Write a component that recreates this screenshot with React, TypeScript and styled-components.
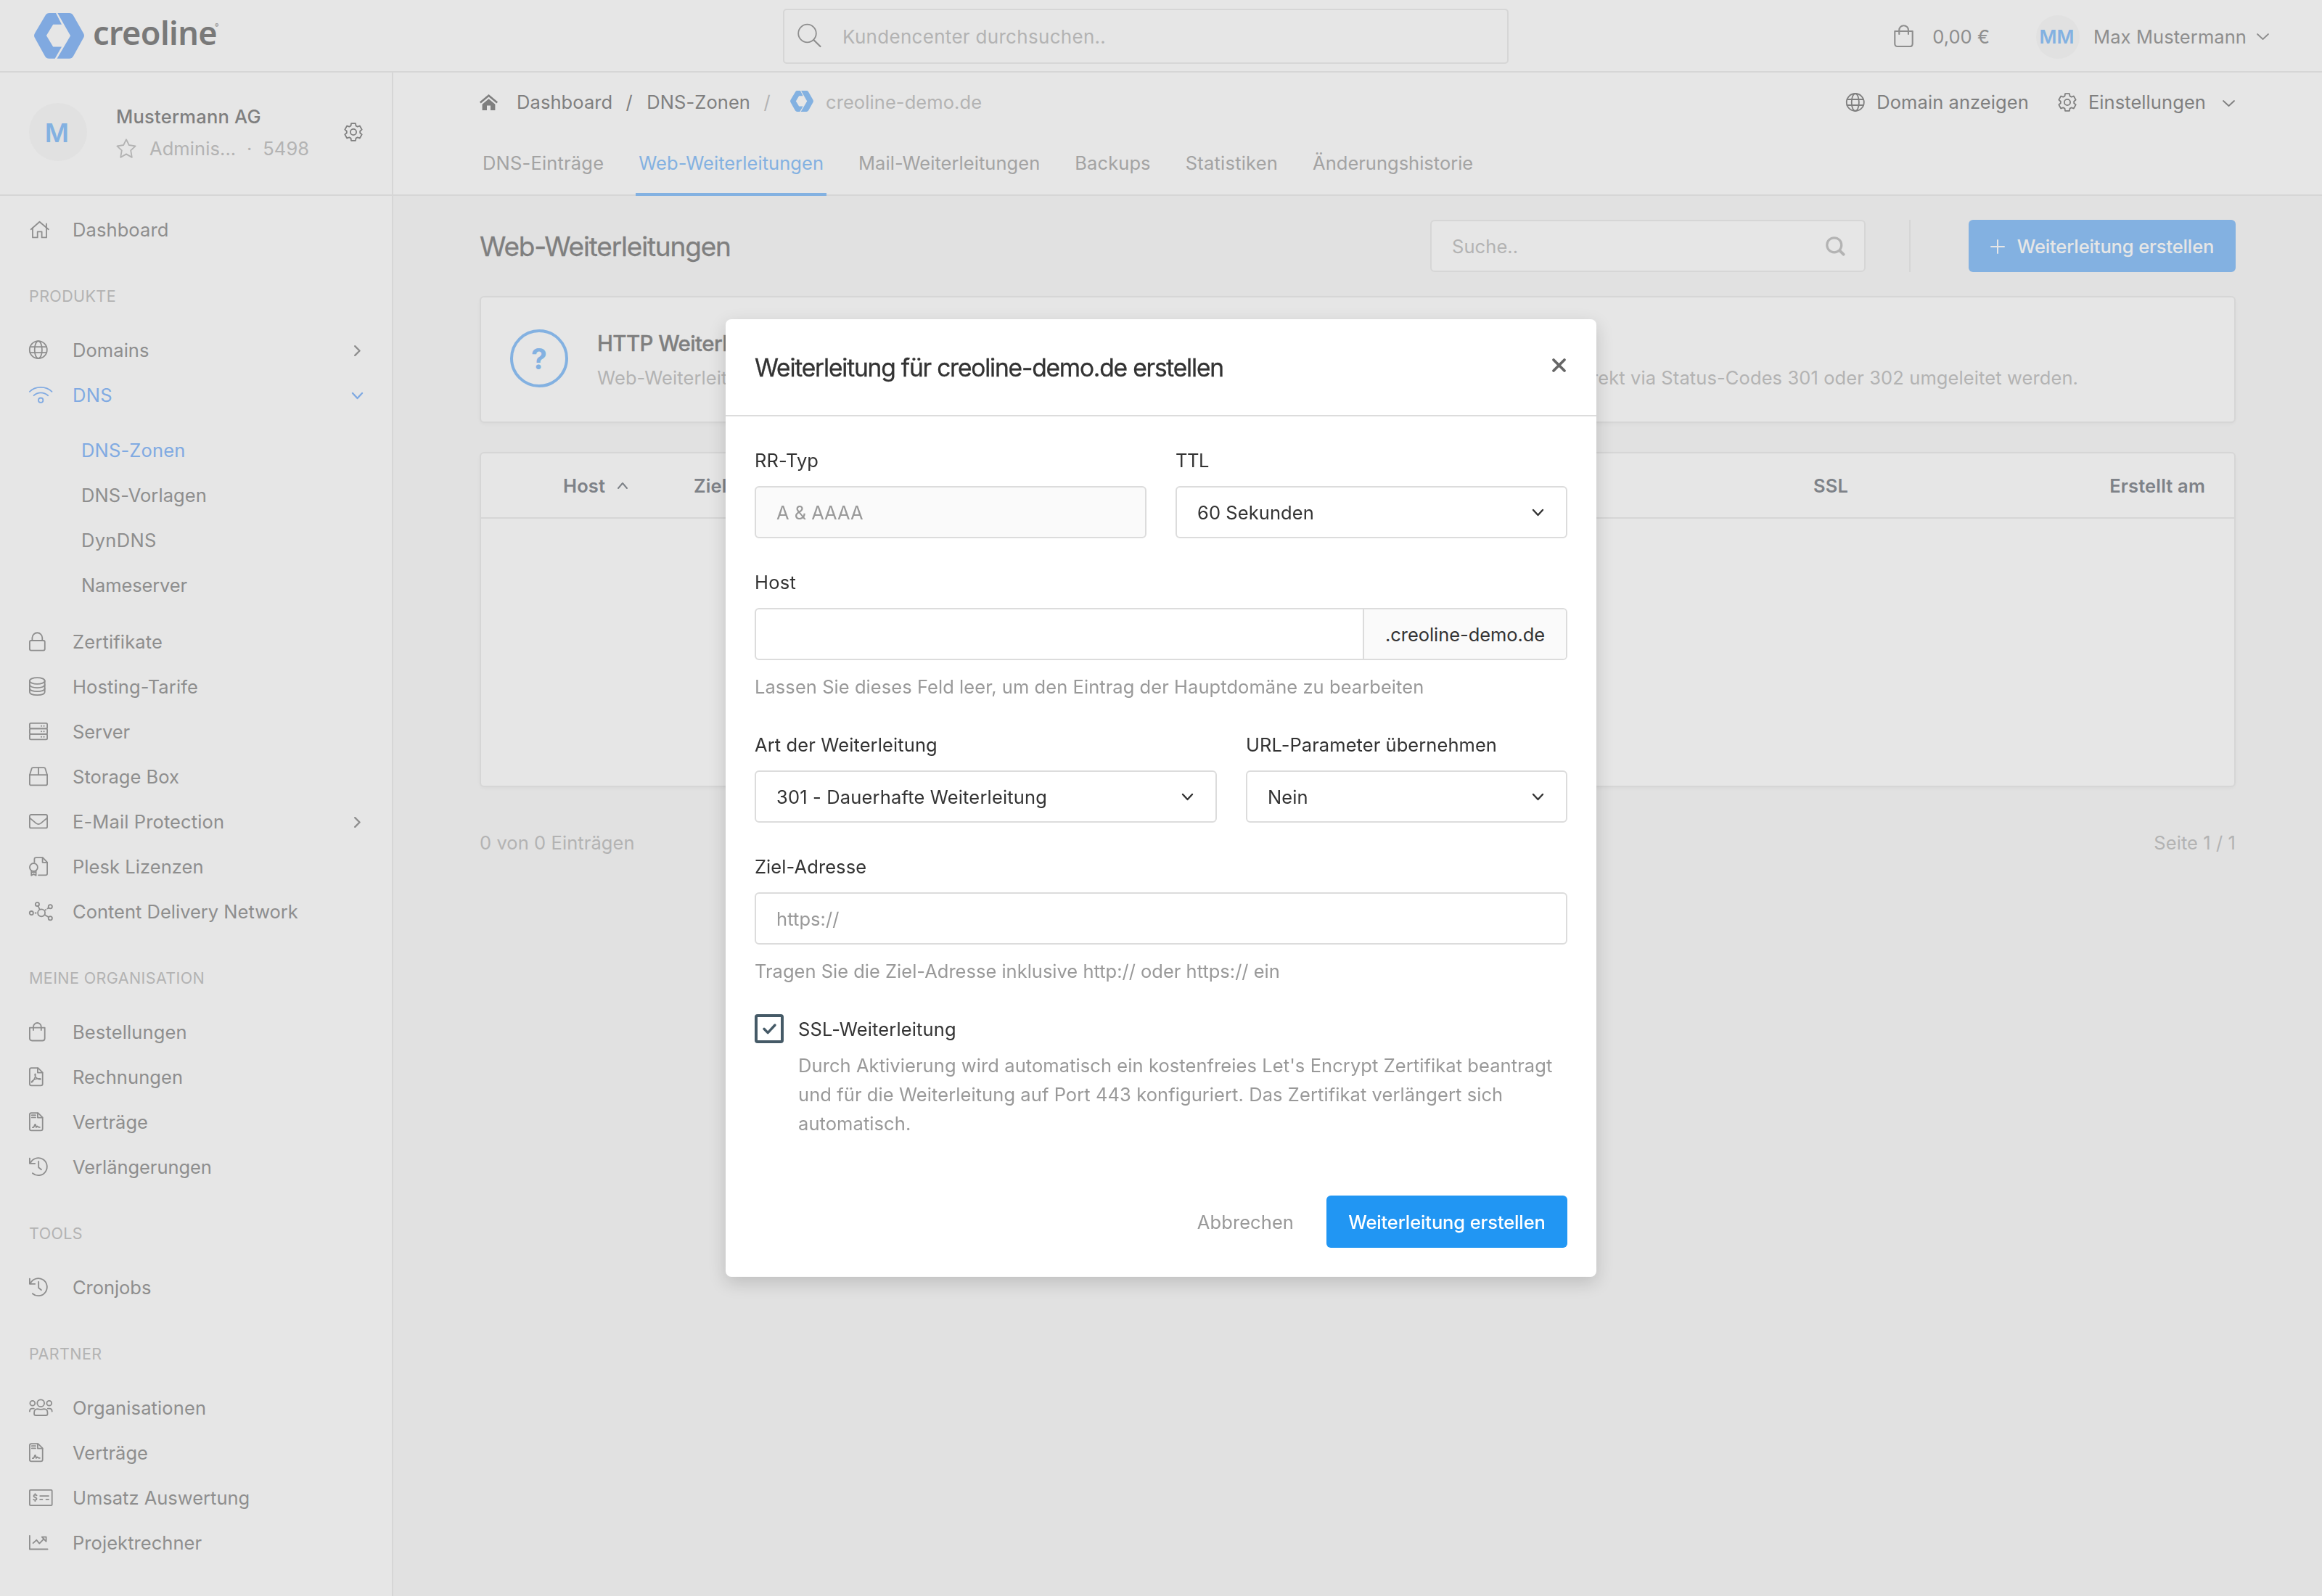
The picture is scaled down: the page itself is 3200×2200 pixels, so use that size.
import React from "react";
import styled, { createGlobalStyle, css } from "styled-components";

const color = {
  page: "#e1e1e1",
  surface: "#e6e6e6",
  line: "#d6d6d6",
  strong: "#7f7f7f",
  text: "#8e8e8e",
  tab: "#a3a3a3",
  muted: "#b3b3b3",
  blue: "#83b1e1",
  navBlue: "#80aae2",
  tableHead: "#7e8288",
  avatar: "#e1e1e1",
  ink: "#333333",
  hint: "#999999",
  field: "#dcdcdc",
  disabled: "#fafafa",
  primary: "#2196f3",
  check: "#455a67",
};

const GlobalStyle = createGlobalStyle`
  *, *::before, *::after { box-sizing: border-box; }
  body {
    margin: 0;
    background: ${color.page};
    font-family: Inter, "Liberation Sans", sans-serif;
    font-size: 25.5px;
    letter-spacing: 0.08px;
    -webkit-font-smoothing: antialiased;
  }
`;

type Tracked = { $ls?: number };
const tracked = css<Tracked>`
  ${(p) => (p.$ls !== undefined ? `letter-spacing: ${p.$ls}px;` : "")}
`;

/* ---------- Icons ---------- */

const Svg = styled.svg`
  display: block;
  flex: none;
  overflow: visible;
  fill: none;
  stroke: currentColor;
  stroke-width: 1.8;
  stroke-linecap: round;
  stroke-linejoin: round;
`;

const cogPath = (cx: number, cy: number, outer: number, inner: number) => {
  const pts: string[] = [];
  const at = (r: number, deg: number) => {
    const a = (deg * Math.PI) / 180;
    return `${(cx + r * Math.cos(a)).toFixed(2)} ${(cy + r * Math.sin(a)).toFixed(2)}`;
  };
  for (let i = 0; i < 6; i++) {
    const base = -90 + i * 60;
    pts.push(at(inner, base - 22), at(outer, base - 14), at(outer, base + 14), at(inner, base + 22));
  }
  return `M${pts.join("L")}Z`;
};

const CogIcon = () => (
  <Svg width="26" height="26" viewBox="0 0 26 26">
    <path d={cogPath(13, 13, 12.2, 9.3)} />
    <circle cx="13" cy="13" r="4.1" />
  </Svg>
);

const GlobeShape = ({ cy }: { cy: number }) => (
  <>
    <circle cx="12.8" cy={cy} r="12" />
    <ellipse cx="12.8" cy={cy} rx="5.1" ry="12" />
    <path d={`M1.5 ${cy - 4}H24.1M1.5 ${cy + 4}H24.1`} />
  </>
);

const GlobeIcon = () => (
  <Svg width="26" height="26" viewBox="0 0 26 26">
    <GlobeShape cy={13} />
  </Svg>
);

const HistoryShape = () => (
  <>
    <path d="M0.9 3.6V10.8H8.2" />
    <path d="M1.9 10.2A12 12 0 1 1 4.9 24.2" />
    <path d="M13.2 8V16.3L17 19.2" />
  </>
);

const SheetShape = () => (
  <>
    <path d="M3.2 3.1H12.4L18.7 9.3V24.9Q18.7 27.3 16.3 27.3H3.3Q0.9 27.3 0.9 24.9V5.5Q0.9 3.1 3.2 3.1Z" />
    <path d="M11.9 3.4V9.6H18.4" />
  </>
);

const BagShape = () => (
  <>
    <path d="M0.9 9.6H21.7V24.2Q21.7 27.5 18.4 27.5H4.2Q0.9 27.5 0.9 24.2Z" />
    <path d="M6 13V8.4A5.4 5.4 0 0 1 16.8 8.4V13" />
  </>
);

const navShapes: Record<string, React.ReactNode> = {
  home: (
    <>
      <path d="M2.6 15.2L14.5 4.8L26.9 15.2" />
      <path d="M23.9 7.4V12.3" />
      <path d="M5 13.6V26.4H11.7V18.4H17.6V26.4H24V13.6" />
    </>
  ),
  globe: <GlobeShape cy={15.2} />,
  dns: (
    <>
      <path d="M0.9 10.8C8.6 2.8 23.6 2.8 31.5 10.8" />
      <path d="M6.6 16.2C12 11.2 20.2 11.2 26.2 16.2" />
      <circle cx="16.2" cy="22.7" r="3.2" />
    </>
  ),
  lock: (
    <>
      <rect x="0.9" y="14" width="20.9" height="13.6" rx="2" />
      <path d="M4.4 14V10.2A6.9 6.9 0 0 1 18.3 10.2V14" />
    </>
  ),
  database: (
    <>
      <ellipse cx="11.3" cy="7.5" rx="10.4" ry="4.4" />
      <path d="M0.9 7.5V23C0.9 28.6 21.7 28.6 21.7 23V7.5" />
      <path d="M0.9 12.8C0.9 18.5 21.7 18.5 21.7 12.8" />
      <path d="M0.9 17.9C0.9 23.6 21.7 23.6 21.7 17.9" />
    </>
  ),
  server: (
    <>
      <rect x="0.9" y="3.8" width="24.2" height="7.6" rx="1.6" />
      <rect x="0.9" y="11.4" width="24.2" height="7.4" rx="1.6" />
      <rect x="0.9" y="18.8" width="24.2" height="7.6" rx="1.6" />
      <path strokeWidth="2" d="M17 7.7h.1M20.5 7.7h.1M17 15.2h.1M20.5 15.2h.1M17 22.7h.1M20.5 22.7h.1" />
    </>
  ),
  box: (
    <>
      <path d="M0.9 13.2L3.7 4.3Q4.1 3.1 5.3 3.1H20.7Q21.9 3.1 22.3 4.3L25.1 13.2V25.4Q25.1 27.3 23.2 27.3H2.8Q0.9 27.3 0.9 25.4Z" />
      <path d="M0.9 13.2H25.1M13.1 3.1V13.2" />
    </>
  ),
  mail: (
    <>
      <rect x="0.9" y="6" width="24.2" height="18.4" rx="2" />
      <path d="M1.1 10.6L9.8 17.9Q13 20.4 16.2 17.9L24.9 10.6" />
    </>
  ),
  license: (
    <>
      <path d="M7.4 9.2V5.4Q7.4 3.1 9.7 3.1H18.9L25.1 9.6V24.9Q25.1 27.3 22.8 27.3H13" />
      <path d="M18.6 3.4V9.8H24.9" />
      <circle cx="6.4" cy="16.5" r="5.5" />
      <path d="M3.2 21.3V27.8L6.4 25.9L9.6 27.8V21.3M3.2 23.4H9.6" />
    </>
  ),
  network: (
    <>
      <circle cx="17.1" cy="17.3" r="5" />
      <circle cx="11.4" cy="5.4" r="2.6" />
      <circle cx="29.3" cy="8.7" r="2.6" />
      <circle cx="3.3" cy="17.6" r="2.6" />
      <circle cx="29.3" cy="24.8" r="2.6" />
      <path d="M12.6 8L14.7 12.7M26.8 10.4L25.4 11.4M23.2 12.9L22.3 13.5M8.6 17.5H9.6M21.6 20L27 23.3" />
    </>
  ),
  bag: <BagShape />,
  pdf: (
    <>
      <SheetShape />
      <path
        strokeWidth="1.5"
        d="M3.9 22.9C5.6 21.8 9.3 15.6 9 12.1C8.8 10.9 7.9 11.3 8 12.5C8.2 15.5 11.6 19 15.4 19C16.4 18.9 16.2 17.8 15 17.7C11.6 17.5 6.6 18.8 4.1 21.3C3.2 22.3 3.2 23.1 3.9 22.9Z"
      />
    </>
  ),
  contract: (
    <>
      <SheetShape />
      <path d="M3.8 6.2H9M3.8 9.4H9" />
      <path d="M4.9 23.2H5.6C6.6 23.2 7 22.4 8 19.4C8.4 18.6 8.8 18.8 9 19.6L9.9 23L11.3 21.4C12.2 22.2 12.6 23 14.9 22.9" />
    </>
  ),
  history: <HistoryShape />,
  users: (
    <>
      <circle cx="16.2" cy="9.2" r="4.9" />
      <circle cx="4.8" cy="9.3" r="3.4" />
      <circle cx="27.8" cy="9.3" r="3.4" />
      <path d="M7.1 24V22.4Q7.1 17.2 11.8 17.2C14.6 18.1 17.8 18.1 20.6 17.2Q25.5 17.2 25.5 22.4V24Q25.5 26 23.4 26H9.2Q7.1 26 7.1 24Z" />
      <path d="M0.9 20.6Q0.9 16.6 4.4 16.6H6.8M31.7 20.6Q31.7 16.6 28.2 16.6H25.8" />
    </>
  ),
  revenue: (
    <>
      <rect x="0.9" y="4.8" width="30.8" height="21.4" rx="1.2" />
      <path d="M10.6 12.4C9.6 11.2 6.3 11.2 6.4 13.3C6.5 15.5 10.6 14.8 10.6 17.1C10.6 19.2 7.2 19 6.1 17.9M8.4 10.2V11.6M8.4 18.9V20.2" />
      <path d="M15.2 13.1H27M15.2 17.9H18.4M23.6 17.9H27" />
    </>
  ),
  chart: (
    <>
      <path d="M0.9 5.8V24.5H25.6" />
      <path d="M5.6 16.2L10.3 11.8L14.3 16.6L20.6 10.2M17.8 7.6H23.6V13.8Z" />
    </>
  ),
};

const NavGlyph = ({ name }: { name: string }) => (
  <Svg width="34" height="32" viewBox="0 0 34 32">
    {navShapes[name]}
  </Svg>
);

const Chevron = ({ w, h, stroke = 2 }: { w: number; h: number; stroke?: number }) => (
  <Svg width={w} height={h} viewBox={`0 0 ${w} ${h}`}>
    <path strokeWidth={stroke} d={`M1 1L${w / 2} ${h - 1}L${w - 1} 1`} />
  </Svg>
);

const ChevronRight = () => (
  <Svg width="9" height="15" viewBox="0 0 9 15">
    <path strokeWidth="2.4" d="M1.2 1.2L7.6 7.5L1.2 13.8" />
  </Svg>
);

const LogoMark = ({ width }: { width: number }) => (
  <Svg width={width} height={width * 0.908} viewBox="0 0 69 62.7">
    <g fill="currentColor" stroke="none">
      <path d="M21 0H30.1L38 15.7H26.2L16.9 31.1L26.2 46.6H38L28.7 62.7H20.5Q17 62.7 15 59.5L1 34.3Q-1 31 1 27.7L15.5 3.2Q17.4 0 21 0Z" />
      <path d="M32.3 0H48.5Q52 0 54 3.2L68 27.7Q70 31 68 34.3L54 59.5Q52 62.7 48.5 62.7H31.6L50.1 31.3Z" />
    </g>
  </Svg>
);

/* ---------- Header ---------- */

const Page = styled.div`
  display: flex;
  flex-direction: column;
  width: 3200px;
  height: 2200px;
  overflow: hidden;
  color: ${color.text};
  line-height: 36px;
  white-space: nowrap;
`;

const Header = styled.header`
  display: grid;
  grid-template-columns: 1079px 1000px 1fr;
  align-items: center;
  flex: none;
  height: 100px;
  border-bottom: 2px solid ${color.line};
  background: ${color.surface};
`;

const Brand = styled.div`
  display: flex;
  align-items: center;
  gap: 12px;
  padding-left: 47px;
  color: #80a9e0;
`;

const Wordmark = styled.span`
  display: flex;
  align-items: flex-start;
  margin-top: -8px;
  color: #797979;
  font: 600 45px/60px "Noto Sans", sans-serif;
  letter-spacing: -0.6px;
`;

const Registered = styled.sup`
  margin: 15px 0 0 -3px;
  font: 400 8px/10px Inter, sans-serif;
`;

const GlobalSearch = styled.div`
  display: flex;
  align-items: center;
  gap: 29px;
  height: 76px;
  margin-top: 2px;
  padding-left: 18px;
  border: 2px solid ${color.line};
  border-radius: 5px;
  color: ${color.muted};
  font-size: 26px;
  letter-spacing: 0.3px;
`;

const SearchGlyph = styled.span`
  margin-top: -3px;
  color: ${color.text};
`;

const SearchHint = styled.span`
  padding-top: 1px;
`;

const Account = styled.div`
  display: flex;
  align-items: center;
  justify-content: flex-end;
  margin-top: 3px;
  padding-right: 73px;
`;

const Cart = styled.div`
  display: flex;
  align-items: center;
  gap: 26px;
  margin-right: 64px;
`;

const Avatar = styled.div<{ $size: number; $font: number; $gap: number }>`
  display: flex;
  align-items: center;
  justify-content: center;
  flex: none;
  width: ${(p) => p.$size}px;
  height: ${(p) => p.$size}px;
  margin-right: ${(p) => p.$gap}px;
  padding: 1px 3px 0 0;
  border-radius: 50%;
  background: ${color.avatar};
  color: ${color.blue};
  font-size: ${(p) => p.$font}px;
  font-weight: 600;
`;

const UserName = styled.span`
  margin-right: 14px;
`;

/* ---------- Sidebar ---------- */

const Shell = styled.div`
  display: flex;
  flex: 1;
  min-height: 0;
`;

const Sidebar = styled.aside`
  flex: none;
  width: 542px;
  border-right: 2px solid ${color.line};
  background: ${color.surface};
`;

const Organisation = styled.div`
  display: flex;
  align-items: center;
  height: 170px;
  padding: 0 40px 4px;
  border-bottom: 2px solid ${color.line};
  color: ${color.strong};
`;

const OrgInfo = styled.div`
  display: flex;
  flex-direction: column;
  flex: 1;
  padding-top: 2px;
  line-height: 44px;
`;

const OrgName = styled.span`
  font-weight: 500;
  letter-spacing: 0.23px;
`;

const OrgMeta = styled.span`
  display: flex;
  align-items: center;
  color: ${color.muted};
`;

const OrgRole = styled.span`
  margin-left: 18px;
`;

const Dot = styled.span`
  width: 37px;
  text-align: center;
`;

const Nav = styled.nav`
  padding-top: 16px;
`;

const Section = styled.h6`
  height: 104px;
  margin: 0;
  padding: 40px 0 0 40px;
  color: ${color.muted};
  font-size: 21.5px;
  font-weight: 400;
  line-height: 40px;
  letter-spacing: 0.4px;
`;

const NavRow = styled.a<{ $active?: boolean }>`
  display: flex;
  align-items: center;
  height: 62px;
  padding: 0 38px 0 40px;
  color: ${(p) => (p.$active ? color.navBlue : color.text)};
`;

const NavIcon = styled.span`
  width: 60px;
`;

const NavLabel = styled.span<Tracked>`
  flex: 1;
  ${tracked}
`;

const NavArrow = styled.span`
  display: flex;
  align-items: center;
  justify-content: center;
  width: 20px;
`;

const SubNav = styled.div`
  padding: 14px 0 16px 72px;
`;

/* ---------- Content ---------- */

const Main = styled.main`
  flex: 1;
  min-width: 0;
`;

const ContentHead = styled.div`
  height: 170px;
  padding: 0 119px;
  border-bottom: 2px solid ${color.line};
  background: ${color.surface};
`;

const CrumbBar = styled.div`
  display: flex;
  justify-content: space-between;
  align-items: center;
  height: 82px;
  color: ${color.strong};
`;

const Crumbs = styled.div`
  display: flex;
  align-items: center;
`;

const CrumbHome = styled.span`
  margin-right: 26px;
`;

const Slash = styled.span<{ $muted?: boolean }>`
  width: 12px;
  margin: 0 18px 0 17px;
  text-align: center;
  ${(p) => (p.$muted ? `color: ${color.muted};` : "")}
`;

const CurrentCrumb = styled.span`
  display: flex;
  align-items: center;
  gap: 17px;
  margin-left: 8px;
  color: ${color.muted};
`;

const CrumbLogo = styled.span`
  margin-top: -2px;
  color: ${color.blue};
`;

const Action = styled.span`
  display: flex;
  align-items: center;
  gap: 16px;
`;

const Actions = styled.div`
  display: flex;
  align-items: center;
  gap: 40px;
`;

const ActionArrow = styled.span`
  margin: 3px 1px 0 7px;
`;

const Tabs = styled.div`
  display: flex;
  gap: 40px;
  color: ${color.tab};
  line-height: 86px;
`;

const Tab = styled.span<Tracked & { $active?: boolean }>`
  position: relative;
  height: 88px;
  padding: 0 4px;
  ${tracked}
  ${(p) =>
    p.$active
      ? css`
          color: ${color.blue};
          &::after {
            content: "";
            position: absolute;
            left: 0;
            right: 0;
            bottom: 0;
            height: 4px;
            background: ${color.blue};
          }
        `
      : ""}
`;

const Content = styled.div`
  padding: 33px 119px 0;
`;

const TitleBar = styled.div`
  display: flex;
  align-items: center;
  height: 72px;
  margin-bottom: 33px;
`;

const Title = styled.h1`
  flex: 1;
  margin: 0;
  padding-top: 1px;
  color: ${color.strong};
  font-size: 37px;
  font-weight: 400;
  letter-spacing: -1.19px;
  -webkit-text-stroke: 0.3px currentColor;
`;

const TableSearch = styled.div`
  display: flex;
  align-items: center;
  justify-content: space-between;
  width: 600px;
  height: 72px;
  padding: 1px 26px 0 28px;
  border: 2px solid ${color.line};
  border-radius: 6px;
  background: ${color.surface};
  color: ${color.muted};
`;

const Divider = styled.div`
  width: 2px;
  height: 72px;
  margin: 0 80px 0 60px;
  background: ${color.line};
`;

const Button = styled.button<{ $tone: string; $text: string; $width: number }>`
  display: flex;
  align-items: center;
  justify-content: center;
  gap: 17px;
  width: ${(p) => p.$width}px;
  height: 72px;
  padding: 1px 0 0;
  border: 0;
  border-radius: 6px;
  background: ${(p) => p.$tone};
  color: ${(p) => p.$text};
  font: 500 25.5px/36px Inter, sans-serif;
  letter-spacing: -0.12px;
`;

const Card = styled.section`
  border: 2px solid ${color.line};
  border-radius: 6px;
  background: ${color.surface};
  box-shadow: 0 2px 4px rgba(0, 0, 0, 0.03);
`;

const InfoCard = styled(Card)`
  display: flex;
  gap: 40px;
  height: 175px;
  margin-bottom: 40px;
  padding-left: 40px;
`;

const Question = styled.div`
  flex: none;
  width: 80px;
  height: 80px;
  margin-top: 44px;
  border: 4px solid ${color.blue};
  border-radius: 50%;
  color: ${color.blue};
  font-size: 39px;
  font-weight: 700;
  line-height: 73px;
  text-align: center;
`;

const InfoText = styled.div`
  padding-top: 39px;
  line-height: 48px;
`;

const InfoTitle = styled.div`
  color: ${color.strong};
  font-size: 29.5px;
  font-weight: 500;
  letter-spacing: -0.63px;
  -webkit-text-stroke: 0.3px currentColor;
`;

const InfoBody = styled.div`
  display: flex;
  justify-content: space-between;
  width: 2041px;
  color: ${color.muted};
  letter-spacing: 0.1px;
`;

const TableCard = styled(Card)`
  height: 462px;
`;

const TableHead = styled.div`
  display: grid;
  grid-template-columns: 113px 180px 1543px 1fr;
  align-items: center;
  height: 90px;
  padding: 1px 40px 0 0;
  border-bottom: 2px solid ${color.line};
  color: ${color.tableHead};
  font-weight: 600;
  letter-spacing: 0.15px;
`;

const SortCell = styled.span`
  display: flex;
  align-items: center;
  gap: 17px;
`;

const SplitCell = styled.span`
  display: flex;
  justify-content: space-between;
`;

const Flip = styled.span`
  transform: scaleY(-1);
`;

const Pagination = styled.div`
  display: flex;
  justify-content: space-between;
  margin-top: 57px;
  color: ${color.muted};
  line-height: 40px;
`;

/* ---------- Modal ---------- */

const Backdrop = styled.div`
  position: fixed;
  inset: 0;
  display: flex;
  align-items: center;
  justify-content: center;
  line-height: 36px;
`;

const Dialog = styled.div`
  width: 1200px;
  height: 1320px;
  border-radius: 8px;
  background: #fff;
  color: ${color.ink};
  box-shadow: 0 8px 24px rgba(0, 0, 0, 0.16);
`;

const DialogHead = styled.div`
  display: flex;
  align-items: center;
  justify-content: space-between;
  height: 134px;
  padding: 0 42px 0 40px;
  border-bottom: 2px solid ${color.field};
`;

const DialogTitle = styled.h2`
  margin: 2px 0 0;
  font-size: 33.5px;
  font-weight: 400;
  letter-spacing: -1.2px;
  -webkit-text-stroke: 0.3px currentColor;
`;

const Close = styled.span`
  margin-bottom: 5px;
  color: #666;
`;

const Form = styled.div`
  padding: 43px 40px 0;
`;

const Row = styled.div<{ $cols?: string; $gap: number }>`
  display: grid;
  grid-template-columns: ${(p) => p.$cols || "1fr"};
  column-gap: 40px;
  margin-bottom: ${(p) => p.$gap}px;
`;

const Field = styled.label`
  display: flex;
  flex-direction: column;
`;

const Label = styled.span<Tracked>`
  margin-bottom: 17px;
  ${tracked}
`;

const Control = styled.div<{ $disabled?: boolean; $placeholder?: boolean } & Tracked>`
  display: flex;
  align-items: center;
  justify-content: space-between;
  height: 72px;
  padding: 1px 31px 0 28px;
  border: 2px solid ${color.field};
  border-radius: 6px;
  background: ${(p) => (p.$disabled ? color.disabled : "#fff")};
  color: ${(p) => (p.$disabled || p.$placeholder ? color.hint : color.ink)};
  ${tracked}
`;

const GroupControl = styled(Control)`
  align-items: stretch;
  justify-content: flex-end;
  padding: 0;
  overflow: hidden;
`;

const Addon = styled.span`
  width: 280px;
  padding-left: 29px;
  border-left: 2px solid ${color.field};
  background: ${color.disabled};
  line-height: 70px;
  letter-spacing: -0.06px;
`;

const Help = styled.span<Tracked>`
  margin-top: 19px;
  color: ${color.hint};
  ${tracked}
`;

const CheckRow = styled.div`
  display: flex;
  align-items: flex-start;
  gap: 20px;
`;

const Checkbox = styled.span`
  display: flex;
  align-items: center;
  justify-content: center;
  flex: none;
  width: 40px;
  height: 40px;
  border: 4px solid ${color.check};
  border-radius: 4px;
  color: ${color.check};
`;

const CheckText = styled.div`
  line-height: 40px;
  padding-top: 1px;
  letter-spacing: 0.13px;
`;

const CheckHelp = styled.div`
  margin-top: 10px;
  color: ${color.hint};
  letter-spacing: 0.075px;
`;

const DialogFoot = styled.div`
  display: flex;
  align-items: center;
  justify-content: flex-end;
  gap: 45px;
  margin-top: 79px;
  color: ${color.hint};
`;

const Cancel = styled.span`
  padding-top: 1px;
`;

/* ---------- Data ---------- */

type Item = { label: string; icon: string; ls?: number; arrow?: boolean };

const products: Item[] = [
  { label: "Zertifikate", icon: "lock", ls: 0.16 },
  { label: "Hosting-Tarife", icon: "database", ls: 0.11 },
  { label: "Server", icon: "server", ls: -0.1 },
  { label: "Storage Box", icon: "box", ls: 0.03 },
  { label: "E-Mail Protection", icon: "mail", ls: 0.12, arrow: true },
  { label: "Plesk Lizenzen", icon: "license", ls: 0.06 },
  { label: "Content Delivery Network", icon: "network", ls: 0 },
];

const organisation: Item[] = [
  { label: "Bestellungen", icon: "bag", ls: 0.14 },
  { label: "Rechnungen", icon: "pdf", ls: 0.08 },
  { label: "Verträge", icon: "contract", ls: 0 },
  { label: "Verlängerungen", icon: "history", ls: -0.05 },
];

const partner: Item[] = [
  { label: "Organisationen", icon: "users", ls: 0.12 },
  { label: "Verträge", icon: "contract", ls: 0 },
  { label: "Umsatz Auswertung", icon: "revenue", ls: 0 },
  { label: "Projektrechner", icon: "chart", ls: 0.06 },
];

const zones = [
  { label: "DNS-Zonen", ls: 0.15, active: true },
  { label: "DNS-Vorlagen", ls: 0.06 },
  { label: "DynDNS", ls: 0.3 },
  { label: "Nameserver", ls: -0.14 },
];

const tabs = [
  { label: "DNS-Einträge", ls: 0.18 },
  { label: "Web-Weiterleitungen", ls: 0.05, active: true },
  { label: "Mail-Weiterleitungen", ls: 0.05 },
  { label: "Backups", ls: 0.1 },
  { label: "Statistiken", ls: 0.22 },
  { label: "Änderungshistorie", ls: 0 },
];

const NavItem = ({ item }: { item: Item }) => (
  <NavRow>
    <NavIcon>
      <NavGlyph name={item.icon} />
    </NavIcon>
    <NavLabel $ls={item.ls}>{item.label}</NavLabel>
    {item.arrow && (
      <NavArrow>
        <ChevronRight />
      </NavArrow>
    )}
  </NavRow>
);

const SelectArrow = () => <Chevron w={15} h={9} stroke={2.4} />;

export default function App() {
  return (
    <>
      <GlobalStyle />
      <Page>
        <Header>
          <Brand>
            <LogoMark width={69} />
            <Wordmark>
              creoline<Registered>®</Registered>
            </Wordmark>
          </Brand>
          <GlobalSearch>
            <SearchGlyph>
              <Svg width="33" height="32" viewBox="0 0 33 32">
                <circle cx="13.5" cy="13" r="12.3" />
                <path strokeWidth="2.2" d="M22.3 22L31.5 31" />
              </Svg>
            </SearchGlyph>
            <SearchHint>Kundencenter durchsuchen..</SearchHint>
          </GlobalSearch>
          <Account>
            <Cart>
              <Svg width="27" height="31" viewBox="0 2.8 22.6 26.4">
                <BagShape />
              </Svg>
              0,00 €
            </Cart>
            <Avatar $size={60} $font={26} $gap={19}>
              MM
            </Avatar>
            <UserName>Max Mustermann</UserName>
            <Chevron w={17} h={9} stroke={1.8} />
          </Account>
        </Header>
        <Shell>
          <Sidebar>
            <Organisation>
              <Avatar $size={80} $font={36} $gap={40}>
                M
              </Avatar>
              <OrgInfo>
                <OrgName>Mustermann AG</OrgName>
                <OrgMeta>
                  <Svg width="28" height="28" viewBox="0 0 28 28">
                    <path d="M14 1.2L17.8 9L26.6 10.3L20.2 16.4L21.8 25.9L14 21.4L6.2 25.9L7.8 16.4L1.4 10.3L10.2 9Z" />
                  </Svg>
                  <OrgRole>Adminis...</OrgRole>
                  <Dot>·</Dot>
                  5498
                </OrgMeta>
              </OrgInfo>
              <CogIcon />
            </Organisation>
            <Nav>
              <NavItem item={{ label: "Dashboard", icon: "home", ls: 0.1 }} />
              <Section>PRODUKTE</Section>
              <NavItem item={{ label: "Domains", icon: "globe", ls: 0.07, arrow: true }} />
              <NavRow $active>
                <NavIcon>
                  <NavGlyph name="dns" />
                </NavIcon>
                <NavLabel $ls={0.3}>DNS</NavLabel>
                <NavArrow>
                  <Chevron w={15} h={9} stroke={2.4} />
                </NavArrow>
              </NavRow>
              <SubNav>
                {zones.map((z) => (
                  <NavRow key={z.label} $active={z.active}>
                    <NavLabel $ls={z.ls}>{z.label}</NavLabel>
                  </NavRow>
                ))}
              </SubNav>
              {products.map((i) => (
                <NavItem key={i.label} item={i} />
              ))}
              <Section>MEINE ORGANISATION</Section>
              {organisation.map((i) => (
                <NavItem key={i.label} item={i} />
              ))}
              <Section>TOOLS</Section>
              <NavItem item={{ label: "Cronjobs", icon: "history", ls: -0.05 }} />
              <Section>PARTNER</Section>
              {partner.map((i) => (
                <NavItem key={i.label} item={i} />
              ))}
            </Nav>
          </Sidebar>
          <Main>
            <ContentHead>
              <CrumbBar>
                <Crumbs>
                  <CrumbHome>
                    <Svg width="25" height="22" viewBox="0 0 25 22">
                      <path strokeWidth="2.6" strokeLinecap="butt" strokeLinejoin="miter" d="M0.8 11.6L12.5 1.8L24.2 11.6" />
                      <path fill="currentColor" stroke="none" d="M12.5 6.2L21.4 13.7V22H15V15.4H10V22H3.6V13.7Z" />
                    </Svg>
                  </CrumbHome>
                  Dashboard
                  <Slash>/</Slash>
                  DNS-Zonen
                  <Slash $muted>/</Slash>
                  <CurrentCrumb>
                    <CrumbLogo>
                      <LogoMark width={32} />
                    </CrumbLogo>
                    creoline-demo.de
                  </CurrentCrumb>
                </Crumbs>
                <Actions>
                  <Action>
                    <GlobeIcon />
                    Domain anzeigen
                  </Action>
                  <Action>
                    <CogIcon />
                    Einstellungen
                    <ActionArrow>
                      <Chevron w={17} h={9} stroke={1.8} />
                    </ActionArrow>
                  </Action>
                </Actions>
              </CrumbBar>
              <Tabs>
                {tabs.map((t) => (
                  <Tab key={t.label} $ls={t.ls} $active={t.active}>
                    {t.label}
                  </Tab>
                ))}
              </Tabs>
            </ContentHead>
            <Content>
              <TitleBar>
                <Title>Web-Weiterleitungen</Title>
                <TableSearch>
                  Suche..
                  <Svg width="27" height="27" viewBox="0 0 27 27">
                    <circle cx="11.8" cy="11.8" r="10" strokeWidth="3.2" />
                    <path strokeWidth="4" d="M19.8 19.8L24.6 24.6" />
                  </Svg>
                </TableSearch>
                <Divider />
                <Button $tone={color.blue} $text={color.surface} $width={368}>
                  <Svg width="20" height="20" viewBox="0 0 20 20">
                    <path strokeWidth="2" d="M10 1V19M1 10H19" />
                  </Svg>
                  Weiterleitung erstellen
                </Button>
              </TitleBar>
              <InfoCard>
                <Question>?</Question>
                <InfoText>
                  <InfoTitle>HTTP Weiterleitungen</InfoTitle>
                  <InfoBody>
                    <span>Web-Weiterleitungen</span>
                    <span>direkt via Status-Codes 301 oder 302 umgeleitet werden.</span>
                  </InfoBody>
                </InfoText>
              </InfoCard>
              <TableCard>
                <TableHead>
                  <span />
                  <SortCell>
                    Host
                    <Flip>
                      <Chevron w={14} h={9} stroke={2} />
                    </Flip>
                  </SortCell>
                  <span>Ziel</span>
                  <SplitCell>
                    <span>SSL</span>
                    <span>Erstellt am</span>
                  </SplitCell>
                </TableHead>
              </TableCard>
              <Pagination>
                <span>0 von 0 Einträgen</span>
                <span>Seite 1 / 1</span>
              </Pagination>
            </Content>
          </Main>
        </Shell>
      </Page>
      <Backdrop>
        <Dialog role="dialog">
          <DialogHead>
            <DialogTitle>Weiterleitung für creoline-demo.de erstellen</DialogTitle>
            <Close>
              <Svg width="19" height="19" viewBox="0 0 19 19">
                <path strokeWidth="3.8" d="M2 2L17 17M17 2L2 17" />
              </Svg>
            </Close>
          </DialogHead>
          <Form>
            <Row $cols="1fr 1fr" $gap={43}>
              <Field>
                <Label $ls={0.1}>RR-Typ</Label>
                <Control $disabled $ls={-0.05}>
                  A &amp; AAAA
                </Control>
              </Field>
              <Field>
                <Label $ls={-0.4}>TTL</Label>
                <Control>
                  60 Sekunden
                  <SelectArrow />
                </Control>
              </Field>
            </Row>
            <Row $gap={44}>
              <Field>
                <Label $ls={0.3}>Host</Label>
                <GroupControl>
                  <Addon>.creoline-demo.de</Addon>
                </GroupControl>
                <Help $ls={0.055}>Lassen Sie dieses Feld leer, um den Eintrag der Hauptdomäne zu bearbeiten</Help>
              </Field>
            </Row>
            <Row $cols="637px 443px" $gap={43}>
              <Field>
                <Label $ls={0.11}>Art der Weiterleitung</Label>
                <Control $ls={0.16}>
                  301 - Dauerhafte Weiterleitung
                  <SelectArrow />
                </Control>
              </Field>
              <Field>
                <Label $ls={0.06}>URL-Parameter übernehmen</Label>
                <Control>
                  Nein
                  <SelectArrow />
                </Control>
              </Field>
            </Row>
            <Row $gap={41}>
              <Field>
                <Label>Ziel-Adresse</Label>
                <Control $placeholder>https://</Control>
                <Help $ls={0}>Tragen Sie die Ziel-Adresse inklusive http:// oder https:// ein</Help>
              </Field>
            </Row>
            <CheckRow>
              <Checkbox>
                <Svg width="19" height="15" viewBox="0 0 19 15">
                  <path strokeWidth="3.4" d="M2 7.2L7.2 12.6L17 2" />
                </Svg>
              </Checkbox>
              <CheckText>
                SSL-Weiterleitung
                <CheckHelp>
                  Durch Aktivierung wird automatisch ein kostenfreies Let's Encrypt Zertifikat beantragt
                  <br />
                  und für die Weiterleitung auf Port 443 konfiguriert. Das Zertifikat verlängert sich
                  <br />
                  automatisch.
                </CheckHelp>
              </CheckText>
            </CheckRow>
            <DialogFoot>
              <Cancel>Abbrechen</Cancel>
              <Button $tone={color.primary} $text="#ffffff" $width={332}>
                Weiterleitung erstellen
              </Button>
            </DialogFoot>
          </Form>
        </Dialog>
      </Backdrop>
    </>
  );
}
